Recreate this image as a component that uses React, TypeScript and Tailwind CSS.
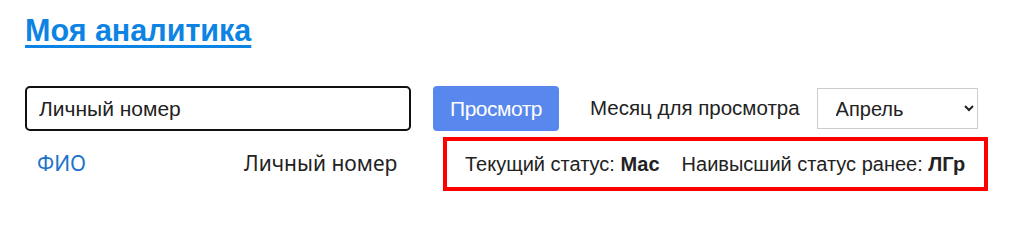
import { useState } from "react";

export default function App() {
  const [month, setMonth] = useState("Апрель");

  return (
    <div className="bg-white w-[1024px] h-[230px] px-[25px] pt-[10px] font-['Liberation_Sans',Arial,sans-serif] text-[#222]">
      <h1 className="text-[30.5px] font-bold leading-[40px]">
        <a href="#" className="text-[#0d84e3] underline decoration-[3px] underline-offset-[4px]">
          Моя аналитика
        </a>
      </h1>

      <div className="flex items-center mt-[36px]">
        <input
          defaultValue="Личный номер"
          className="w-[386px] h-[45px] border-2 border-[#111] rounded-[5px] px-[12px] text-[21px] text-[#222] outline-none"
        />
        <button className="ml-[22px] w-[126px] h-[45px] rounded-[4px] bg-[#5888ee] text-white text-[21px] tracking-[-0.5px]">
          Просмотр
        </button>
        <span className="ml-[31px] text-[20.5px]">Месяц для просмотра</span>
        <select
          value={month}
          onChange={(e) => setMonth(e.target.value)}
          className="ml-[17px] w-[161px] h-[41px] border border-[#ccc] bg-white pl-[14px] pr-[8px] text-[20px]"
        >
          <option>Январь</option>
          <option>Февраль</option>
          <option>Март</option>
          <option>Апрель</option>
          <option>Май</option>
        </select>
      </div>

      <div className="flex items-center mt-[6px]">
        <div className="w-[418px] flex items-center font-['Noto_Sans',sans-serif] text-[21px]">
          <a href="#" className="ml-[12px] w-[207px] text-[#1a73c9]">
            ФИО
          </a>
          <span className="text-[#222]">Личный номер</span>
        </div>
        <div className="w-[545px] h-[54px] border-[4px] border-[#f00] flex items-center pl-[18px] text-[20px]">
          <span>
            Текущий статус: <b>Мас</b>
          </span>
          <span className="ml-[22px]">
            Наивысший статус ранее: <b>ЛГр</b>
          </span>
        </div>
      </div>
    </div>
  );
}
